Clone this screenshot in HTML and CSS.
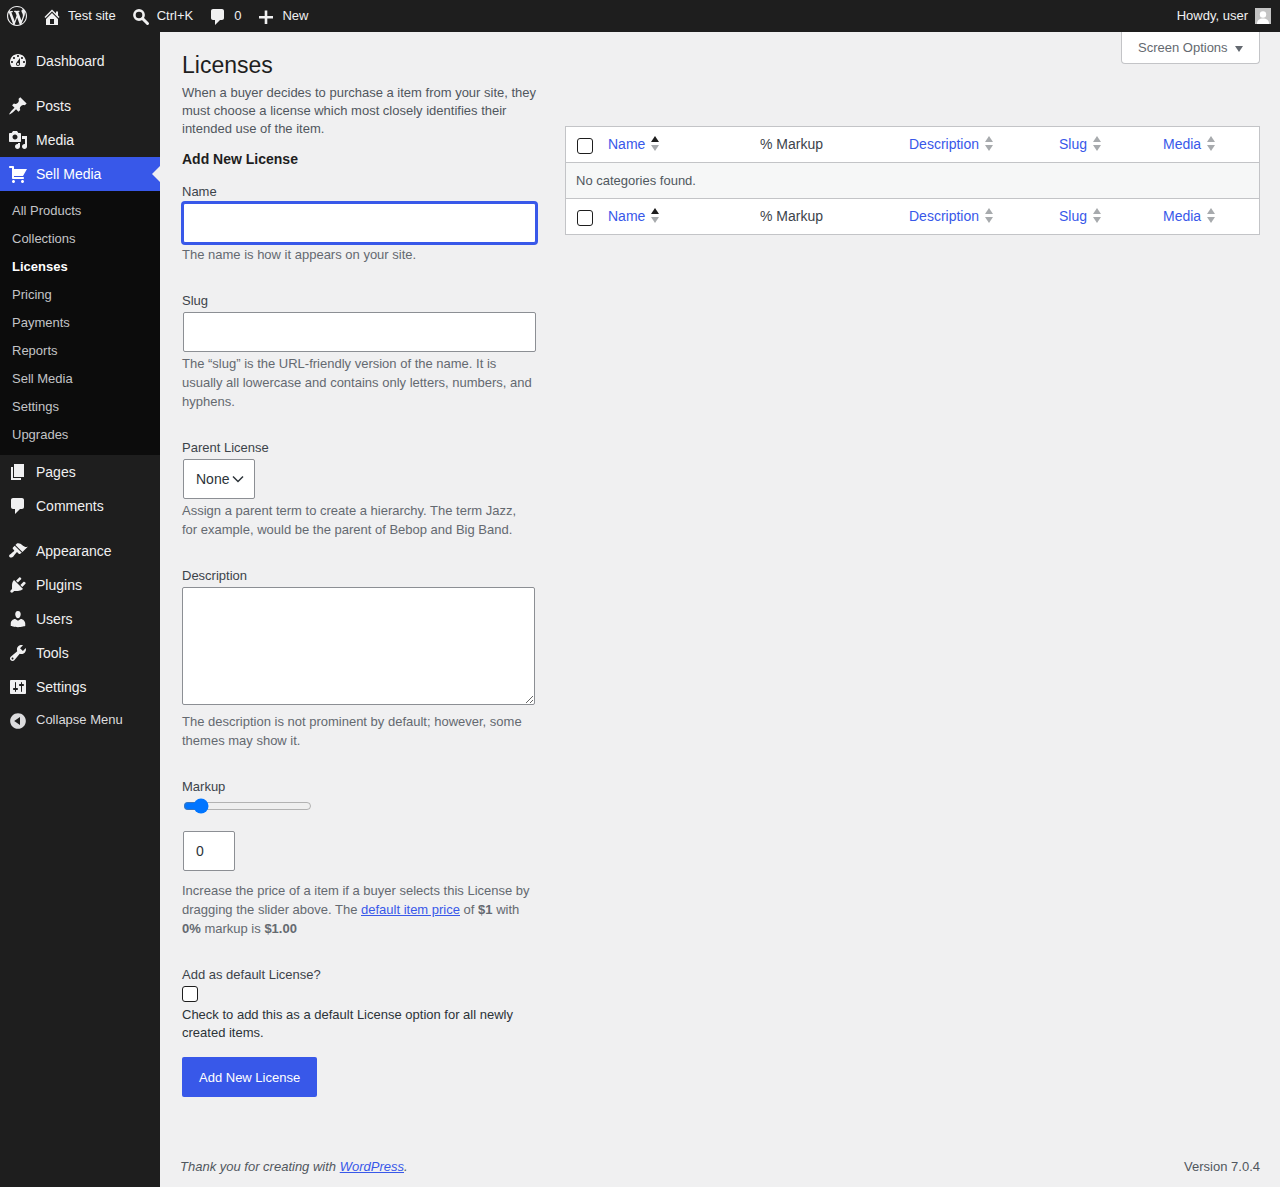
FILE: index.html
```html
<!DOCTYPE html>
<html lang="en">
  <head>
    <meta charset="UTF-8" />
    <title>Licenses</title>
    <link rel="stylesheet" href="styles.css">
  </head>

  <body>
    <header class="adminbar">
      <a class="bar-item bar-logo"><svg class="bar-icon" viewBox="0 0 20 20"><path fill-rule="evenodd" d="M20 10c0-5.51-4.49-10-10-10C4.48 0 0 4.49 0 10c0 5.52 4.48 10 10 10 5.51 0 10-4.48 10-10zM7.78 15.37L4.37 6.22c.55-.02 1.17-.08 1.17-.08.5-.06.44-1.13-.06-1.11 0 0-1.45.11-2.37.11-.18 0-.37 0-.58-.01C4.12 2.69 6.87 1.11 10 1.11c2.33 0 4.45.87 6.05 2.34-.68-.11-1.65.39-1.65 1.58 0 .74.45 1.36.9 2.1.35.61.55 1.36.55 2.46 0 1.49-1.4 5-1.4 5l-3.03-8.37c.54-.02.82-.17.82-.17.5-.05.44-1.25-.06-1.22 0 0-1.44.12-2.38.12-.87 0-2.33-.12-2.33-.12-.5-.03-.56 1.2-.06 1.22l.92.08 1.26 3.41zM17.41 10c.24-.64.74-1.87.43-4.25.7 1.29 1.05 2.71 1.05 4.25 0 3.29-1.73 6.24-4.4 7.78.97-2.59 1.94-5.2 2.92-7.78zM6.1 18.09C3.12 16.65 1.11 13.53 1.11 10c0-1.3.23-2.48.72-3.59C3.25 10.3 4.67 14.2 6.1 18.09zm4.03-6.63l2.58 6.98c-.86.29-1.76.45-2.71.45-.79 0-1.57-.11-2.29-.33.81-2.38 1.62-4.74 2.42-7.1z"/></svg></a>
      <a class="bar-item"><svg class="bar-icon" viewBox="0 0 20 20"><path fill-rule="evenodd" d="M16 8.5l1.53 1.53-1.06 1.06L10 4.62l-6.47 6.47-1.06-1.06L10 2.5l4 4v-2h2v4zm-6-2.46l6 5.99V18H4v-5.97zM12 17v-5H8v5h4z"/></svg>Test site</a>
      <a class="bar-item"><svg class="bar-icon" viewBox="0 0 20 20"><circle cx="8" cy="8" r="4.6" fill="none" stroke="currentColor" stroke-width="2.6"/><path d="M11.5 11.5l5 5" stroke="currentColor" stroke-width="3" stroke-linecap="round"/></svg>Ctrl+K</a>
      <a class="bar-item"><svg class="bar-icon" viewBox="0 0 20 20"><path d="M5 2h9c1.1 0 2 .9 2 2v7c0 1.1-.9 2-2 2h-2l-5 5v-5H5c-1.1 0-2-.9-2-2V4c0-1.1.9-2 2-2z"/></svg>0</a>
      <a class="bar-item"><svg class="bar-icon" viewBox="0 0 20 20"><path d="M17 9v2.6h-5.7V17H8.7v-5.4H3V9h5.7V3.5h2.6V9z"/></svg>New</a>
      <a class="bar-item bar-user">Howdy, user
        <svg class="avatar" viewBox="0 0 16 16"><rect width="16" height="16" fill="#c4c4c4"/><circle cx="8" cy="6.5" r="3.2" fill="#fff"/><path d="M2 16c0-4 2.5-5.5 6-5.5s6 1.500 6 5.500z" fill="#fff"/></svg>
      </a>
    </header>

    <div class="layout">
      <nav class="sidebar">
        <ul class="menu">
          <li class="menu-item"><svg viewBox="0 0 20 20"><path fill-rule="evenodd" d="M3.76 16h12.48c1.1-1.37 1.76-3.11 1.76-5 0-4.42-3.58-8-8-8s-8 3.58-8 8c0 1.89.66 3.63 1.76 5zM10 4c.55 0 1 .45 1 1s-.45 1-1 1-1-.45-1-1 .45-1 1-1zM6 6c.55 0 1 .45 1 1s-.45 1-1 1-1-.45-1-1 .45-1 1-1zm8 0c.55 0 1 .45 1 1s-.45 1-1 1-1-.45-1-1 .45-1 1-1zm-5.37 5.55L12 7v6c0 1.1-.9 2-2 2s-2-.9-2-2c0-.57.24-1.08.63-1.45zM4 10c.55 0 1 .45 1 1s-.45 1-1 1-1-.45-1-1 .45-1 1-1zm12 0c.55 0 1 .45 1 1s-.45 1-1 1-1-.45-1-1 .45-1 1-1zm-5 3c0-.55-.45-1-1-1s-1 .45-1 1 .45 1 1 1 1-.45 1-1z"/></svg>Dashboard</li>
          <li class="menu-sep"></li>
          <li class="menu-item"><svg viewBox="0 0 20 20"><path d="M10.44 3.02l1.82-1.82 6.36 6.35-1.83 1.82c-1.05-.68-2.48-.57-3.41.36l-.75.75c-.92.93-1.04 2.35-.35 3.41l-1.83 1.82-2.41-2.41-2.8 2.79c-.42.42-3.38 2.71-3.8 2.29s1.86-3.39 2.28-3.81l2.79-2.79L4.1 9.36l1.83-1.82c1.05.69 2.48.57 3.4-.36l.75-.75c.93-.92 1.05-2.35.36-3.41z"/></svg>Posts</li>
          <li class="menu-item"><svg viewBox="0 0 20 20"><path fill-rule="evenodd" d="M13 11V4c0-.55-.45-1-1-1h-1.67L9 1H5L3.67 3H2c-.55 0-1 .45-1 1v7c0 .55.45 1 1 1h10c.55 0 1-.45 1-1zM7 4.500c1.38 0 2.500 1.120 2.500 2.500S8.380 9.500 7 9.500 4.500 8.380 4.500 7 5.620 4.500 7 4.500zM14 6h5v10.500c0 1.380-1.120 2.500-2.500 2.500S14 17.880 14 16.500s1.120-2.500 2.500-2.500c.17 0 .34.02.5.05V9h-3V6zm-4 8.050V13h2v3.500c0 1.380-1.120 2.500-2.500 2.500S7 17.880 7 16.500 8.120 14 9.500 14c.17 0 .34.02.5.05z"/></svg>Media</li>
          <li class="menu-item is-current"><svg viewBox="0 0 20 20"><path d="M6 13h9c.55 0 1 .45 1 1s-.45 1-1 1H5c-.55 0-1-.45-1-1V4H2c-.55 0-1-.45-1-1s.45-1 1-1h3c.55 0 1 .45 1 1v2h13l-4 7H6v1zm-.5 3c.83 0 1.500.67 1.500 1.500S6.330 19 5.500 19 4 18.330 4 17.500 4.670 16 5.500 16zm9 0c.83 0 1.500.67 1.500 1.500s-.67 1.500-1.500 1.500-1.500-.67-1.500-1.500.67-1.500 1.500-1.500z"/></svg>Sell Media</li>
          <li>
            <ul class="submenu">
              <li>All Products</li>
              <li>Collections</li>
              <li class="is-active">Licenses</li>
              <li>Pricing</li>
              <li>Payments</li>
              <li>Reports</li>
              <li>Sell Media</li>
              <li>Settings</li>
              <li>Upgrades</li>
            </ul>
          </li>
          <li class="menu-item"><svg viewBox="0 0 20 20"><path d="M6 15V2h10v13H6zm-1 1h8v2H3V5h2v11z"/></svg>Pages</li>
          <li class="menu-item"><svg viewBox="0 0 20 20"><path d="M5 2h9c1.100 0 2 .9 2 2v7c0 1.100-.9 2-2 2h-2l-5 5v-5H5c-1.100 0-2-.9-2-2V4c0-1.100.9-2 2-2z"/></svg>Comments</li>
          <li class="menu-sep"></li>
          <li class="menu-item"><svg viewBox="0 0 20 20"><path d="M14.480 11.060L7.410 3.990l1.500-1.500c.5-.56 2.300-.47 3.510.32 1.210.8 1.430 1.280 2.910 2.100 1.180.64 2.450 1.260 4.450.85zm-.71.71L6.700 4.700 4.930 6.470c-.39.39-.39 1.020 0 1.410l1.060 1.060c.39.39.39 1.030 0 1.420-.6.6-1.430 1.110-2.210 1.690-.35.26-.7.53-1.010.84C1.430 13.230.4 14.890 1.580 16.070s2.840.15 4.180-1.190c.31-.31.58-.66.85-1.010.57-.78 1.080-1.610 1.690-2.210.39-.39 1.020-.39 1.410 0l1.060 1.060c.39.39 1.020.39 1.410 0z"/></svg>Appearance</li>
          <li class="menu-item"><svg viewBox="0 0 20 20"><path d="M13.110 4.360L9.870 7.600 8 5.730l3.240-3.240c.35-.34 1.050-.2 1.560.32.52.51.66 1.210.31 1.550zm-8 1.770l.91-1.120 9.010 9.010-1.190.84c-.71.71-2.630 1.160-3.820 1.160H6.140L4.900 17.260c-.59.59-1.540.59-2.120 0-.59-.58-.59-1.530 0-2.120l1.240-1.240v-3.880c0-1.130.4-3.190 1.090-3.890zm7.260 3.970l3.240-3.240c.34-.35 1.040-.21 1.550.31.52.51.66 1.210.31 1.550l-3.240 3.250z"/></svg>Plugins</li>
          <li class="menu-item"><svg viewBox="0 0 20 20"><path d="M10 9.250c-2.270 0-2.730-3.440-2.730-3.440C7 4.020 7.820 2 9.970 2c2.160 0 2.980 2.020 2.710 3.810 0 0-.41 3.440-2.680 3.440zm0 2.570L12.720 10c2.390 0 4.520 2.330 4.520 4.530v2.490s-3.650 1.130-7.240 1.130c-3.650 0-7.240-1.130-7.240-1.130v-2.490c0-2.250 1.940-4.480 4.470-4.480z"/></svg>Users</li>
          <li class="menu-item"><svg viewBox="0 0 20 20"><path fill-rule="evenodd" d="M16.680 9.770c-1.340 1.340-3.300 1.670-4.950.99l-5.410 6.520c-.99.99-2.590.99-3.580 0s-.99-2.590 0-3.570l6.520-5.420c-.68-1.650-.35-3.610.99-4.950 1.280-1.280 3.120-1.620 4.720-1.060l-2.890 2.890 2.820 2.820 2.860-2.870c.53 1.580.18 3.390-1.080 4.650zM3.810 16.210c.4.39 1.040.39 1.430 0 .4-.4.4-1.040 0-1.430-.39-.4-1.030-.4-1.430 0-.39.39-.39 1.030 0 1.430z"/></svg>Tools</li>
          <li class="menu-item"><svg viewBox="0 0 20 20"><path fill-rule="evenodd" d="M18 16V4c0-.55-.45-1-1-1H3c-.55 0-1 .45-1 1v12c0 .55.45 1 1 1h14c.55 0 1-.45 1-1zM8 11h1c.55 0 1 .45 1 1s-.45 1-1 1H8v1.500c0 .28-.22.5-.5.5s-.5-.22-.5-.5V13H6c-.55 0-1-.45-1-1s.45-1 1-1h1V5.500c0-.28.22-.5.5-.5s.5.22.5.5V11zm5-2h-1c-.55 0-1-.45-1-1s.45-1 1-1h1V5.500c0-.28.22-.5.5-.5s.5.22.5.5V7h1c.55 0 1 .45 1 1s-.45 1-1 1h-1v5.500c0 .28-.22.5-.5.5s-.5-.22-.5-.5V9z"/></svg>Settings</li>
          <li class="menu-item menu-collapse"><svg viewBox="0 0 20 20"><path fill-rule="evenodd" d="M10 2.160c4.330 0 7.840 3.510 7.840 7.840s-3.510 7.840-7.840 7.840S2.160 14.330 2.160 10 5.710 2.160 10 2.160zm2 11.720V6.120L6.180 9.970z"/></svg>Collapse Menu</li>
        </ul>
      </nav>

      <div class="content">
        <div class="wrap">
          <div class="screen-options">Screen Options <span class="caret"></span></div>
          <h1>Licenses</h1>
          <div class="columns">
            <div class="col-left">
              <p class="intro">When a buyer decides to purchase a item from your site, they must choose a license which most closely identifies their intended use of the item.</p>
              <h2>Add New License</h2>
              <form>
                <div class="field">
                  <label>Name</label>
                  <input class="text-input is-focus" type="text" />
                  <p class="desc">The name is how it appears on your site.</p>
                </div>
                <div class="field">
                  <label>Slug</label>
                  <input class="text-input" type="text" />
                  <p class="desc">The “slug” is the URL-friendly version of the name. It is usually all lowercase and contains only letters, numbers, and hyphens.</p>
                </div>
                <div class="field">
                  <label>Parent License</label>
                  <select class="select"><option>None</option></select>
                  <p class="desc">Assign a parent term to create a hierarchy. The term Jazz, for example, would be the parent of Bebop and Big Band.</p>
                </div>
                <div class="field">
                  <label>Description</label>
                  <textarea class="textarea"></textarea>
                  <p class="desc desc-textarea">The description is not prominent by default; however, some themes may show it.</p>
                </div>
                <div class="field">
                  <label>Markup</label>
                  <input class="range" type="range" value="9" />
                  <input class="number" type="text" value="0" />
                  <p class="desc desc-number">Increase the price of a item if a buyer selects this License by dragging the slider above. The <a href="#">default item price</a> of <b>$1</b> with <b>0%</b> markup is <b>$1.00</b></p>
                </div>
                <div class="field field-check">
                  <label>Add as default License?</label>
                  <input class="check" type="checkbox" />
                  <p class="check-note">Check to add this as a default License option for all newly created items.</p>
                </div>
                <button class="primary" type="button">Add New License</button>
              </form>
            </div>
            <div class="col-right">
              <table class="list-table">
                <thead>
                  <tr>
                    <th class="col-cb"><input class="check" type="checkbox" /></th>
                    <th class="col-name"><a class="sort" href="#">Name<span class="sort-arrows is-asc"><i></i><i></i></span></a></th>
                    <th class="col-markup">% Markup</th>
                    <th class="col-desc"><a class="sort" href="#">Description<span class="sort-arrows"><i></i><i></i></span></a></th>
                    <th class="col-slug"><a class="sort" href="#">Slug<span class="sort-arrows"><i></i><i></i></span></a></th>
                    <th><a class="sort" href="#">Media<span class="sort-arrows"><i></i><i></i></span></a></th>
                  </tr>
                </thead>
                <tbody>
                  <tr><td colspan="6">No categories found.</td></tr>
                </tbody>
                <tfoot>
                  <tr>
                    <th><input class="check" type="checkbox" /></th>
                    <th><a class="sort" href="#">Name<span class="sort-arrows is-asc"><i></i><i></i></span></a></th>
                    <th>% Markup</th>
                    <th><a class="sort" href="#">Description<span class="sort-arrows"><i></i><i></i></span></a></th>
                    <th><a class="sort" href="#">Slug<span class="sort-arrows"><i></i><i></i></span></a></th>
                    <th><a class="sort" href="#">Media<span class="sort-arrows"><i></i><i></i></span></a></th>
                  </tr>
                </tfoot>
              </table>
            </div>
          </div>
        </div>
        <footer class="footer">
          <em>Thank you for creating with <a href="#">WordPress</a>.</em>
          <span>Version 7.0.4</span>
        </footer>
      </div>
    </div>
  </body>
</html>
```

FILE: styles.css
```css
* {
  box-sizing: border-box;
}

body {
  background-color: #f0f0f1;
  color: #3c434a;
  font-family: "Liberation Sans", Arial, sans-serif;
  font-size: 13px;
  line-height: 18px;
  margin: 0;
  min-height: 100vh;
  display: flex;
  flex-direction: column;
}

a {
  color: #3858e9;
}

ul {
  list-style: none;
  margin: 0;
  padding: 0;
}

/* top bar */
.adminbar {
  background-color: #1e1e1e;
  color: #f0f0f1;
  height: 32px;
  display: flex;
  align-items: center;
  gap: 15px;
  padding: 0 9px 0 7px;
}

.bar-item {
  display: flex;
  align-items: center;
  gap: 6px;
  color: inherit;
}

.bar-icon {
  width: 20px;
  height: 20px;
  margin-top: 1px;
  fill: currentColor;
}

.bar-logo .bar-icon {
  margin-top: 0;
}

.bar-user {
  margin-left: auto;
  gap: 7px;
}

.avatar {
  width: 16px;
  height: 16px;
  display: block;
}

.layout {
  flex: 1;
  display: flex;
}

/* left menu */
.sidebar {
  background-color: #1e1e1e;
  width: 160px;
  flex-shrink: 0;
  padding-top: 12px;
  color: #f0f0f1;
  font-size: 14px;
}

.menu-item {
  height: 34px;
  display: flex;
  align-items: center;
  gap: 8px;
  padding-left: 8px;
  position: relative;
}

.menu-item svg {
  width: 20px;
  height: 20px;
  fill: currentColor;
  flex-shrink: 0;
}

.menu-sep {
  height: 11px;
}

.menu-item.is-current {
  background-color: #3858e9;
  color: #fff;
}

.menu-item.is-current::after {
  content: "";
  position: absolute;
  right: 0;
  top: 9px;
  border: 8px solid transparent;
  border-right-color: #f0f0f1;
  border-left-width: 0;
}

.menu-collapse {
  height: 32px;
  font-size: 13px;
  color: #dcdcde;
}

.menu-collapse svg {
  margin-top: 2px;
}

.submenu {
  background-color: #0c0c0c;
  padding: 6px 0;
  font-size: 13px;
  color: #c3c4c7;
}

.submenu li {
  height: 28px;
  line-height: 28px;
  padding-left: 12px;
}

.submenu .is-active {
  color: #fff;
  font-weight: bold;
}

/* content */
.content {
  flex: 1;
  min-width: 0;
  display: flex;
  flex-direction: column;
}

.wrap {
  flex: 1;
  padding: 18px 20px 0 22px;
  position: relative;
}

.screen-options {
  position: absolute;
  top: 0;
  right: 20px;
  width: 139px;
  height: 32px;
  background-color: #fff;
  border: 1px solid #c3c4c7;
  border-top: 0;
  border-radius: 0 0 4px 4px;
  color: #646970;
  display: flex;
  align-items: center;
  gap: 5px;
  padding-left: 16px;
}

.caret {
  border: 4px solid transparent;
  border-top: 6px solid #646970;
  border-bottom: 0;
  margin-left: 2px;
  margin-top: 2px;
}

h1 {
  color: #1e1e1e;
  font-size: 23px;
  font-weight: 400;
  line-height: 30px;
  margin: 0 0 4px;
}

.columns {
  display: flex;
}

.col-left {
  width: 354px;
  flex-shrink: 0;
}

.col-right {
  flex: 1;
  margin-left: 29px;
  padding-top: 42px;
}

.intro {
  color: #50575e;
  width: 360px;
  margin: 0 0 12px;
}

h2 {
  color: #1e1e1e;
  font-size: 14px;
  line-height: 18px;
  margin: 0 0 14px;
}

/* form */
.field {
  margin-bottom: 27px;
}

.field label {
  display: block;
  height: 18px;
  line-height: 20px;
  margin-bottom: 3px;
}

.text-input,
.select,
.number {
  display: block;
  height: 40px;
  margin: 0 0 0 1px;
  background-color: #fff;
  border: 1px solid #8c8f94;
  border-radius: 2px;
  color: #2c3338;
  font: inherit;
  font-size: 14px;
  padding: 0 12px;
}

.text-input {
  width: 353px;
}

.is-focus {
  border-color: #3858e9;
  box-shadow: 0 0 0 2px #3858e9;
  outline: 0;
}

.select {
  appearance: none;
  width: 72px;
  background-image: url("data:image/svg+xml,%3Csvg xmlns='http://www.w3.org/2000/svg' width='12' height='8'%3E%3Cpath d='M1 1.500l5 5 5-5' fill='none' stroke='%232c3338' stroke-width='1.500'/%3E%3C/svg%3E");
  background-repeat: no-repeat;
  background-position: right 10px center;
}

.textarea {
  display: block;
  width: 353px;
  height: 118px;
  background-color: #fff;
  border: 1px solid #8c8f94;
  border-radius: 2px;
  margin: 0;
}

.range {
  display: block;
  width: 129px;
  height: 16px;
  margin: 2px 0 17px 1px;
}

.number {
  width: 52px;
}

.desc {
  color: #646970;
  width: 350px;
  line-height: 19px;
  margin: 2px 0 0;
}

.desc-textarea {
  margin-top: 7px;
}

.desc-number {
  margin-top: 10px;
}

.check {
  appearance: none;
  display: block;
  width: 16px;
  height: 16px;
  margin: 0;
  background-color: #fff;
  border: 1px solid #1e1e1e;
  border-radius: 3px;
}

.check-note {
  color: #2c3338;
  margin: 3px 0 0;
  padding-top: 1px;
}

.field-check {
  margin-bottom: 15px;
}

.primary {
  display: block;
  height: 40px;
  padding: 1px 17px 0;
  background-color: #3858e9;
  border: 0;
  border-radius: 2px;
  color: #fff;
  font: inherit;
}

/* table */
.list-table {
  width: 100%;
  table-layout: fixed;
  border-collapse: separate;
  border-spacing: 0;
  background-color: #fff;
  border: 1px solid #c3c4c7;
}

.list-table th {
  height: 36px;
  padding: 0 10px 2px;
  font-size: 14px;
  font-weight: 400;
  text-align: left;
}

.list-table thead th {
  border-bottom: 1px solid #c3c4c7;
}

.list-table tfoot th {
  border-top: 1px solid #c3c4c7;
}

.list-table th:first-child {
  padding: 2px 0 0 11px;
}

.list-table .col-cb {
  width: 32px;
}

.list-table .col-name {
  width: 152px;
}

.list-table .col-markup {
  width: 149px;
}

.list-table .col-desc {
  width: 150px;
}

.list-table .col-slug {
  width: 104px;
}

.list-table td {
  height: 35px;
  padding: 0 10px;
  background-color: #f6f7f7;
  color: #50575e;
}

.sort {
  display: inline-flex;
  align-items: center;
  gap: 5px;
  text-decoration: none;
}

.sort-arrows {
  display: flex;
  flex-direction: column;
  gap: 3px;
  margin-left: 1px;
}

.sort-arrows i {
  display: block;
  border: 4.500px solid transparent;
  border-top: 0;
  border-bottom: 6px solid #a7aaad;
}

.sort-arrows i:last-child {
  border-bottom: 0;
  border-top: 6px solid #a7aaad;
}

.sort-arrows.is-asc i:first-child {
  border-bottom-color: #1e1e1e;
}

/* footer */
.footer {
  display: flex;
  justify-content: space-between;
  padding: 0 20px 11px;
  color: #50575e;
}
```
